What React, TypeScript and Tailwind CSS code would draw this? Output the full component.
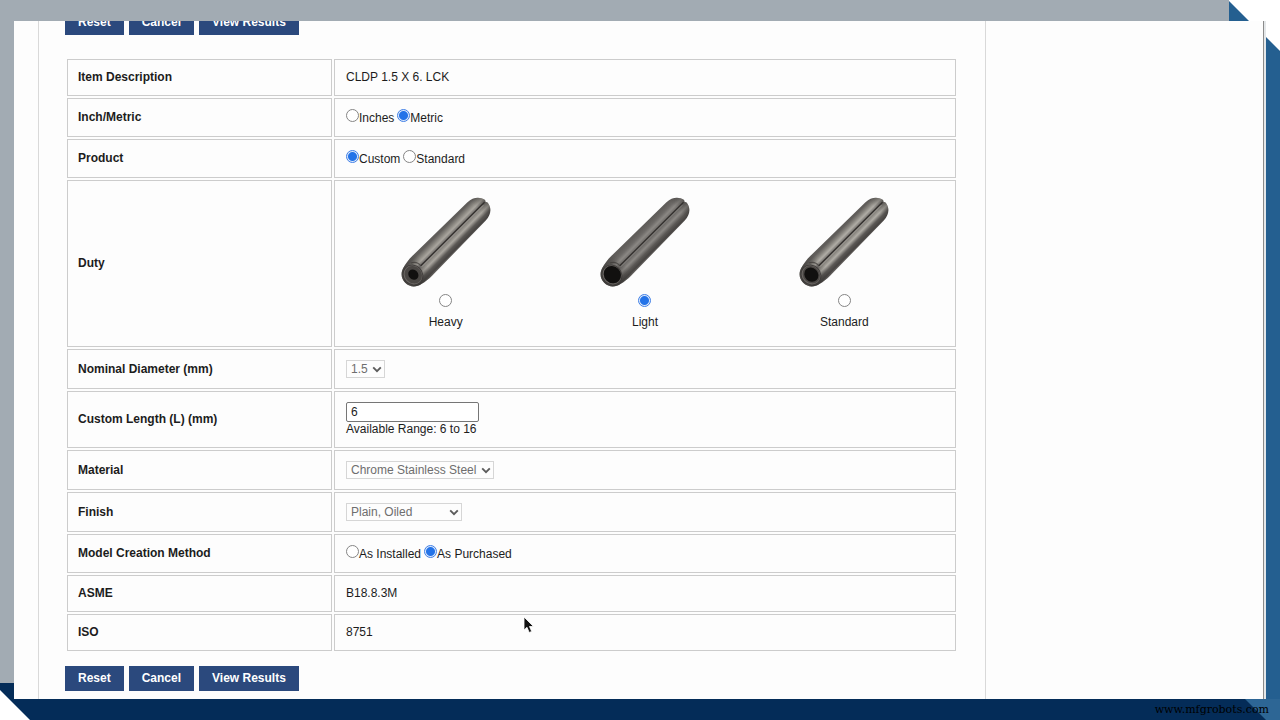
import type { ReactNode } from 'react';

type PinProps = { id: string; hole: number; light: string; mid: string };

const pins: (PinProps & { label: string })[] = [
  { id: 'heavy', label: 'Heavy', hole: 5.5, light: '#aaa69f', mid: '#85827c' },
  { id: 'light', label: 'Light', hole: 9, light: '#8b8884', mid: '#6d6a67' },
  { id: 'standard', label: 'Standard', hole: 7.5, light: '#b0ada6', mid: '#85827c' },
];

const pinOutline =
  'M-11 0 C-11 -7 -6 -11.3 0 -12.4 C4 -13.4 8 -14 13 -14 L90 -13 C98 -12.6 103 -8 104 -2 L103 -0.5 L104 1.5 C103.5 8 98 12.6 90 13 L13 14 C8 14 4 13.4 0 12.4 C-6 11.3 -11 7 -11 0 Z';

function Pin({ id, hole, light, mid }: PinProps) {
  return (
    <svg viewBox="0 0 100 100" className="size-[100px]" aria-hidden="true">
      <defs>
        <linearGradient id={`body-${id}`} x1="0" y1="0" x2="0" y2="1">
          <stop offset="0" stopColor="#5f5c59" />
          <stop offset="0.1" stopColor="#615e5b" />
          <stop offset="0.22" stopColor={mid} />
          <stop offset="0.34" stopColor={light} />
          <stop offset="0.46" stopColor="#6d6a67" />
          <stop offset="0.54" stopColor={mid} />
          <stop offset="0.66" stopColor={light} />
          <stop offset="0.8" stopColor="#5b5855" />
          <stop offset="0.92" stopColor="#474442" />
          <stop offset="1" stopColor="#6b6865" />
        </linearGradient>
        <linearGradient id={`end-${id}`} x1="0" y1="0" x2="1" y2="0">
          <stop offset="0" stopColor="#2f2d2b" stopOpacity="0.8" />
          <stop offset="0.16" stopColor="#2f2d2b" stopOpacity="0.25" />
          <stop offset="0.24" stopColor="#2f2d2b" stopOpacity="0" />
          <stop offset="0.9" stopColor="#2f2d2b" stopOpacity="0" />
          <stop offset="1" stopColor="#2f2d2b" stopOpacity="0.4" />
        </linearGradient>
      </defs>
      <g transform="translate(17 84) rotate(-45)">
        <path d={pinOutline} fill={`url(#body-${id})`} />
        <path d={pinOutline} fill={`url(#end-${id})`} />
        <path d="M12 -1 L102 -0.8" stroke="#33302e" strokeWidth="1.3" />
        <path d="M12 0.4 L99 0.4" stroke={light} strokeWidth="0.9" opacity="0.8" />
        <path d="M7 -10 C11 -8 12.5 -5 12 -1" fill="none" stroke="#3a3735" strokeWidth="1" opacity="0.7" />
        <ellipse rx="10" ry="10.8" fill="#3f3c3a" />
        <ellipse rx="9" ry="9.9" fill="#6a6663" />
        <ellipse cx="0.4" rx="8.2" ry="9.1" fill="#4a4744" />
        <ellipse cx="0.5" rx={hole - 0.8} ry={hole} fill="#11100f" />
      </g>
    </svg>
  );
}

const radioClass =
  'size-[13px] shrink-0 appearance-none rounded-full border border-[#858585] bg-white checked:border-[#3f7fe6] checked:bg-[radial-gradient(circle,#2373e8_0,#2373e8_4px,#dbe8fb_5px)]';

function RadioPair({ name, options, value }: { name: string; options: string[]; value: string }) {
  return (
    <div className="flex gap-[3px]">
      {options.map((option) => (
        <label key={option} className="flex h-[17px]">
          <input type="radio" name={name} defaultChecked={option === value} className={radioClass} />
          <span className="pt-px leading-4">{option}</span>
        </label>
      ))}
    </div>
  );
}

function DisabledSelect({ id, value, width }: { id: string; value: string; width: string }) {
  return (
    <div className={`relative ${width}`}>
      <select
        id={id}
        disabled
        defaultValue={value}
        className="block h-[18px] w-full appearance-none border border-[#d6d6d6] bg-[#fdfdfd] pl-1 leading-4 text-[#6e6e6e] opacity-100"
      >
        <option>{value}</option>
      </select>
      <svg viewBox="0 0 10 7" className="pointer-events-none absolute top-1.5 right-[3px] h-[7px] w-2.5" aria-hidden="true">
        <path d="M1.2 1.3 L5 5.1 L8.8 1.3" fill="none" stroke="#5c5c5c" strokeWidth="1.9" />
      </svg>
    </div>
  );
}

function Actions() {
  return (
    <div className="flex gap-[5px]">
      {['Reset', 'Cancel', 'View Results'].map((label) => (
        <button key={label} type="button" className="bg-[#2b497d] px-[13px] py-[5px] leading-[15px] font-bold text-white">
          {label}
        </button>
      ))}
    </div>
  );
}

function Row({ label, htmlFor, children }: { label: string; htmlFor?: string; children: ReactNode }) {
  return (
    <tr>
      <th scope="row" className="w-[265px] border border-[#ccc] p-2.5 text-left font-bold">
        {htmlFor ? <label htmlFor={htmlFor}>{label}</label> : label}
      </th>
      <td className="border border-[#ccc] px-[11px] py-2.5">{children}</td>
    </tr>
  );
}

function Configurator() {
  return (
    <form className="w-[948px] border-x border-[#d9d9d9] pr-[27px] pb-2 pl-[26px]">
      {/* scrolled a little, so the first row of buttons is cut off */}
      <div className="-mt-[11px] mb-[22px]">
        <Actions />
      </div>
      <table className="w-full border-separate border-spacing-[2px]">
        <tbody>
          <Row label="Item Description">CLDP 1.5 X 6. LCK</Row>
          <Row label="Inch/Metric">
            <RadioPair name="units" options={['Inches', 'Metric']} value="Metric" />
          </Row>
          <Row label="Product">
            <RadioPair name="product" options={['Custom', 'Standard']} value="Custom" />
          </Row>
          <Row label="Duty">
            <div className="grid grid-cols-3 pb-1.5">
              {pins.map(({ label, ...pin }) => (
                <label key={label} className="flex flex-col items-center">
                  <Pin {...pin} />
                  <input type="radio" name="duty" defaultChecked={label === 'Light'} className={`${radioClass} mt-[3px] mb-2`} />
                  {label}
                </label>
              ))}
            </div>
          </Row>
          <Row label="Nominal Diameter (mm)" htmlFor="diameter">
            <DisabledSelect id="diameter" value="1.5" width="w-[39px]" />
          </Row>
          <Row label="Custom Length (L) (mm)" htmlFor="length">
            <input
              id="length"
              type="text"
              defaultValue="6"
              className="block h-5 w-[133px] rounded-[2px] border border-[#767676] bg-white px-1"
            />
            Available Range: 6 to 16
          </Row>
          <Row label="Material" htmlFor="material">
            <DisabledSelect id="material" value="Chrome Stainless Steel" width="w-[148px]" />
          </Row>
          <Row label="Finish" htmlFor="finish">
            <DisabledSelect id="finish" value="Plain, Oiled" width="w-[116px]" />
          </Row>
          <Row label="Model Creation Method">
            <RadioPair name="method" options={['As Installed', 'As Purchased']} value="As Purchased" />
          </Row>
          <Row label="ASME">B18.8.3M</Row>
          <Row label="ISO">8751</Row>
        </tbody>
      </table>
      <div className="mt-[13px]">
        <Actions />
      </div>
    </form>
  );
}

export default function App() {
  return (
    <div className="relative flex min-h-screen flex-col bg-white font-['Liberation_Sans',Arial,sans-serif] text-[12px] leading-[15px] text-[#1c1c1c]">
      <div className="flex h-[21px]">
        <div className="flex-1 bg-[#a2abb3]" />
        <svg viewBox="0 0 51 21" className="h-[21px] w-[51px]" aria-hidden="true">
          <path d="M0 1 L20 21 H0 Z" fill="#245f90" />
        </svg>
      </div>

      <div className="flex flex-1">
        <div className="flex w-3.5 flex-col">
          <div className="flex-1 bg-[#a2abb3]" />
          <div className="h-4 bg-[#042c58]" />
        </div>
        <main className="flex flex-1 overflow-hidden border-r border-[#8b8b8b] bg-[#fdfdfd] pl-6">
          <Configurator />
        </main>
        <div className="w-0.5 bg-[#e4e7e9]" />
        <div className="flex w-3.5 flex-col">
          <svg viewBox="0 0 14 30" className="h-[30px] w-3.5" aria-hidden="true">
            <path d="M0 16 L14 30 H0 Z" fill="#245f90" />
          </svg>
          <div className="flex-1 bg-[#245f90]" />
        </div>
      </div>

      <footer className="relative flex h-[21px] items-center justify-end bg-[#042c58] pr-[11px]">
        <svg viewBox="0 0 35 21" className="absolute right-0 bottom-0 h-[21px] w-[35px]" aria-hidden="true">
          <path d="M0 0 H35 V21 H21 Z" fill="#2d6695" />
        </svg>
        <a href="http://www.mfgrobots.com" className="relative font-['DejaVu_Serif',serif] text-[11px] text-black">
          www.mfgrobots.com
        </a>
      </footer>

      <svg viewBox="0 0 30 30" className="absolute bottom-0 left-0 size-[30px]" aria-hidden="true">
        <path d="M0 0 L30 30 H0 Z" fill="#fff" />
      </svg>
      <svg viewBox="0 0 12 18" className="absolute top-[616px] left-[523px] h-[18px] w-3" aria-hidden="true">
        <path d="M1 1 V14 L4 11.3 L6.2 16.5 L8.7 15.4 L6.5 10.5 H10.5 Z" fill="#111" stroke="#fff" strokeWidth="0.8" />
      </svg>
    </div>
  );
}
